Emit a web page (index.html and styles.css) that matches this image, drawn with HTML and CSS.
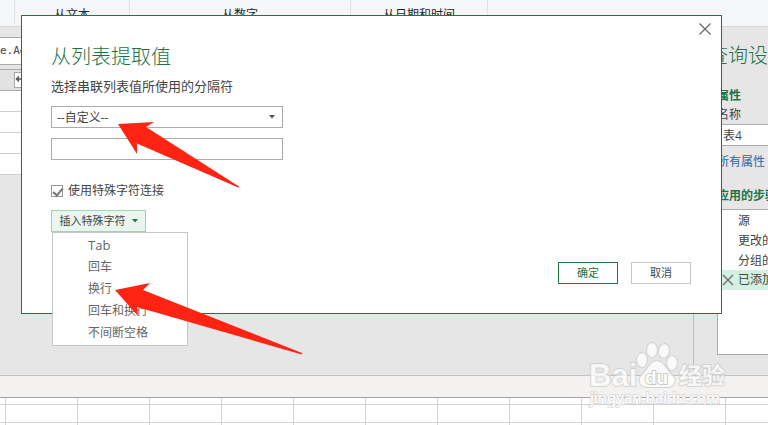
FILE: index.html
```html
<!DOCTYPE html>
<html lang="zh-CN">
<head>
<meta charset="utf-8">
<meta name="viewport" content="width=device-width, initial-scale=1">
<title>从列表提取值</title>
<link rel="stylesheet" href="styles.css">
</head>
<body>
<div class="app">
  <header class="ribbon">
    <span class="group group-edge"></span>
    <span class="group group-text">从文本</span>
    <span class="group group-number">从数字</span>
    <span class="group group-date">从日期和时间</span>
  </header>

  <main class="workspace">
    <section class="preview">
      <div class="formula">e.Ad</div>
      <div class="column-head">
        <svg class="expand" viewBox="0 0 16 16" aria-hidden="true"><rect x="0.500" y="0.500" width="15" height="15" fill="#fff" stroke="#a0a8ac"/><path d="M3 7h5v5M5 4.500L2.500 7 5 9.500M13 7H8" fill="none" stroke="#555" stroke-width="1.500"/></svg>
      </div>
      <div class="row"></div>
      <div class="row"></div>
      <div class="row"></div>
      <div class="row"></div>
    </section>
    <aside class="settings">
      <h2 class="settings-title">查询设置</h2>
      <div class="settings-body">
        <h3 class="settings-head">属性</h3>
        <label class="name-label" for="name">名称</label>
        <input class="name-input" id="name" type="text" value="表4">
        <a class="all-link" href="#">所有属性</a>
        <h3 class="settings-head">应用的步骤</h3>
        <ul class="steps">
          <li class="step">源</li>
          <li class="step">更改的类型</li>
          <li class="step">分组的行</li>
          <li class="step step-current">
            <svg class="step-delete" viewBox="0 0 12 12" aria-hidden="true"><path d="M1 1l10 10M11 1L1 11" stroke="#777" stroke-width="1.500"/></svg>
            已添加自定义
          </li>
        </ul>
      </div>
    </aside>
  </main>

  <div class="strip"></div>
  <div class="sheet"></div>

  <div class="dialog" role="dialog" aria-labelledby="title">
    <button class="close" type="button" aria-label="关闭">
      <svg class="close-icon" viewBox="0 0 12 12"><path d="M0.500 0.500l11 11M11.500 0.500l-11 11" stroke="#666" stroke-width="1.200"/></svg>
    </button>
    <h1 class="title" id="title">从列表提取值</h1>
    <label class="prompt" for="separator">选择串联列表值所使用的分隔符</label>
    <div class="combo">
      <select class="field" id="separator"><option>--自定义--</option></select>
      <svg class="combo-arrow" viewBox="0 0 6 4" aria-hidden="true"><path d="M0 0h6L3 3.500z" fill="#555"/></svg>
    </div>
    <input class="field" type="text" aria-label="自定义分隔符">
    <label class="check"><input class="check-box" type="checkbox" checked>使用特殊字符连接</label>
    <div class="insert">
      <button class="insert-button" type="button">插入特殊字符
        <svg class="insert-arrow" viewBox="0 0 6 4" aria-hidden="true"><path d="M0 0h6L3 3.500z" fill="#217346"/></svg>
      </button>
      <div class="menu">
        <button class="menu-item menu-latin" type="button">Tab</button>
        <button class="menu-item" type="button">回车</button>
        <button class="menu-item" type="button">换行</button>
        <button class="menu-item" type="button">回车和换行</button>
        <button class="menu-item" type="button">不间断空格</button>
      </div>
    </div>
    <div class="actions">
      <button class="action action-ok" type="button">确定</button>
      <button class="action" type="button">取消</button>
    </div>
  </div>

  <svg class="arrow arrow-combo" viewBox="0 0 122 66" aria-hidden="true"><path d="M0 2L36 0 28 5 121 64.500Q122 66 119 65L19 21.500 19 32z" fill="#ff2313"/></svg>
  <svg class="arrow arrow-menu" viewBox="0 0 188 72" aria-hidden="true"><path d="M0 7L35 0 28 7 187 70Q188 72 185 71L22 24 23 33z" fill="#ff2313"/></svg>

  <svg class="watermark" viewBox="0 0 140 68" aria-hidden="true">
    <g fill="#fff" fill-opacity="0.800" stroke="#cdcdcd" stroke-opacity="0.800" stroke-width="2" stroke-linejoin="round" paint-order="stroke">
      <ellipse cx="54" cy="19" rx="5" ry="7"/>
      <ellipse cx="64" cy="9" rx="5" ry="7"/>
      <ellipse cx="76" cy="10" rx="5" ry="7" transform="rotate(12 76 10)"/>
      <ellipse cx="84" cy="22" rx="5" ry="7"/>
      <path d="M69 20C62 20 60 29 54 34C49 39 52 46 59 46H79C87 46 89 39 84 34C78 29 76 20 69 20Z"/>
      <text class="mark-logo" x="1" y="45">Bai</text>
      <text class="mark-cn" x="91" y="43">经验</text>
    </g>
    <text class="mark-du" x="57" y="43">du</text>
    <text class="mark-url" x="2" y="62">jingyan.baidu.com</text>
  </svg>
</div>
</body>
</html>
```

FILE: styles.css
```css
* {
  box-sizing: border-box;
}

body {
  margin: 0;
  background: #e6e6e6;
  color: #444;
  font: 12px/20px "Open Sans", "Noto Sans CJK SC", sans-serif;
}

button,
input,
select {
  margin: 0;
  color: inherit;
  font: inherit;
}

h1,
h2,
h3,
ul {
  margin: 0;
  padding: 0;
}

.app {
  position: relative;
  display: flex;
  flex-direction: column;
  min-height: 100vh;
  overflow: hidden;
}

/* Ribbon */
.ribbon {
  display: flex;
  height: 27px;
  padding-bottom: 3px;
  border-bottom: 1px solid #d6d8da;
  background: #f4f6f8;
  color: #262626;
  white-space: nowrap;
}

.group {
  padding-top: 5px;
  border-right: 1px solid #dfe1e3;
  text-align: center;
}

.group-edge { width: 15px; }
.group-text { width: 115px; }
.group-number { width: 221px; }
.group-date { width: 137px; }

/* Query editor */
.workspace {
  display: flex;
  flex: 1;
}

.preview {
  flex: 1;
  padding-top: 10px;
}

.formula {
  height: 28px;
  border: solid #ababab;
  border-width: 1px 0;
  background: #fff;
  font: 11px/26px "DejaVu Sans Mono", monospace;
}

.column-head {
  height: 22px;
  margin-top: 4px;
  padding: 2px 14px;
  border: solid #ababab;
  border-width: 1px 0;
  background: #e2e2e2;
}

.expand {
  display: block;
  width: 16px;
  height: 16px;
}

.row {
  height: 21px;
  border-bottom: 1px solid #d0d0d0;
  background: #fff;
}

.settings {
  width: 75px;
  padding: 14px 0 20px;
  border-left: 1px solid #bcbcbc;
  overflow: hidden;
  white-space: nowrap;
}

.settings-title {
  padding-left: 14px;
  color: #217346;
  font-size: 20px;
  font-weight: 300;
  line-height: 30px;
}

.settings-body {
  display: flex;
  flex-direction: column;
  padding: 15px 0 0 23px;
}

.settings-head {
  color: #217346;
  font-size: 12px;
  line-height: 20px;
}

.name-label {
  line-height: 18px;
}

.name-input {
  width: 100%;
  height: 22px;
  padding: 0 5px;
  border: 1px solid #ababab;
  border-right: 0;
  border-radius: 0;
  background: #fff;
}

.all-link {
  margin: 6px 0 14px;
  color: #2b67a5;
  text-decoration: none;
}

.steps {
  height: 146px;
  margin-top: 3px;
  border: 1px solid #ababab;
  border-right: 0;
  background: #fff;
  list-style: none;
}

.step {
  height: 20px;
  padding-left: 20px;
  line-height: 22px;
}

.step-current {
  display: flex;
  align-items: center;
  gap: 4px;
  padding-left: 4px;
  background: #d3f0e0;
}

.step-delete {
  flex: none;
  width: 12px;
  height: 12px;
}

.strip {
  height: 22px;
  border-top: 1px solid #c3c3c3;
  background: #f3f2f0;
}

.sheet {
  height: 28px;
  border-top: 1px solid #a3a3a3;
  background:
    repeating-linear-gradient(90deg, #d2d2d2 0 1px, transparent 1px 72px) 5px 0,
    repeating-linear-gradient(#d2d2d2 0 1px, #fff 1px 18px) 0 6px;
}

/* Dialog */
.dialog {
  position: absolute;
  top: 15px;
  left: 21px;
  right: 46px;
  display: flex;
  flex-direction: column;
  align-items: flex-start;
  padding: 25px 30px 29px 29px;
  border: 1px solid #217346;
  background: #fff;
}

.close {
  position: absolute;
  top: 4px;
  right: 7px;
  display: flex;
  padding: 3px;
  border: 0;
  background: none;
}

.close-icon {
  width: 12px;
  height: 12px;
}

.title {
  color: #217346;
  font-size: 20px;
  font-weight: 300;
  line-height: 32px;
}

.prompt {
  font-size: 13px;
  line-height: 26px;
}

.combo {
  position: relative;
  margin: 7px 0 10px;
}

.field {
  display: block;
  width: 232px;
  height: 22px;
  padding: 0 5px;
  border: 1px solid #ababab;
  border-radius: 0;
  appearance: none;
  background: #fff;
  line-height: 22px;
}

.combo-arrow {
  position: absolute;
  top: 9px;
  right: 8px;
  width: 6px;
  height: 4px;
}

.check {
  display: flex;
  align-items: center;
  gap: 5px;
  margin: 20px 0 8px;
  line-height: 22px;
}

.check-box {
  width: 12px;
  height: 12px;
  appearance: none;
  border: 1px solid #999;
  background: #fff;
}

.check-box:checked::after {
  content: "";
  display: block;
  width: 4px;
  height: 8px;
  margin-left: 3px;
  border: solid #777;
  border-width: 0 2px 2px 0;
  transform: rotate(40deg);
}

.insert {
  position: relative;
}

.insert-button {
  display: flex;
  align-items: center;
  justify-content: center;
  gap: 6px;
  width: 95px;
  height: 22px;
  padding: 0;
  border: 1px solid #9fd5b7;
  background: #e9f5ee;
  font-size: 11px;
}

.insert-arrow {
  width: 6px;
  height: 4px;
}

.menu {
  position: absolute;
  top: 100%;
  left: 1px;
  display: flex;
  flex-direction: column;
  width: 136px;
  padding: 1px 0;
  border: 1px solid #c6c6c6;
  background: #fff;
}

.menu-item {
  height: 22px;
  padding: 0 0 0 35px;
  border: 0;
  background: none;
  color: #666;
  text-align: left;
}

.menu-latin {
  font-size: 13px;
}

.actions {
  display: flex;
  align-self: flex-end;
  gap: 13px;
  margin-top: 30px;
}

.action {
  width: 60px;
  height: 22px;
  padding: 0;
  border: 1px solid #c6c6c6;
  background: #fff;
  font-size: 11px;
}

.action-ok {
  border-color: #217346;
  color: #217346;
}

/* Annotations laid over the window */
.arrow,
.watermark {
  position: absolute;
  pointer-events: none;
}

.arrow-combo {
  top: 122px;
  left: 118px;
  width: 122px;
  height: 66px;
}

.arrow-menu {
  top: 283px;
  left: 115px;
  width: 188px;
  height: 72px;
}

.watermark {
  right: 40px;
  bottom: 16px;
  width: 140px;
  height: 68px;
  overflow: visible;
}

.mark-logo {
  font: bold 31px "Liberation Sans", sans-serif;
}

.mark-cn {
  font: bold 23px "Noto Sans CJK SC", sans-serif;
}

.mark-url {
  fill: #fff;
  stroke: #dcdcdc;
  stroke-width: 2px;
  paint-order: stroke;
  font: 15px "Noto Sans", sans-serif;
}

.mark-du {
  fill: #fff;
  stroke: #c9c9c9;
  stroke-width: 2px;
  paint-order: stroke;
  font: bold 19px "Liberation Sans", sans-serif;
}
```
